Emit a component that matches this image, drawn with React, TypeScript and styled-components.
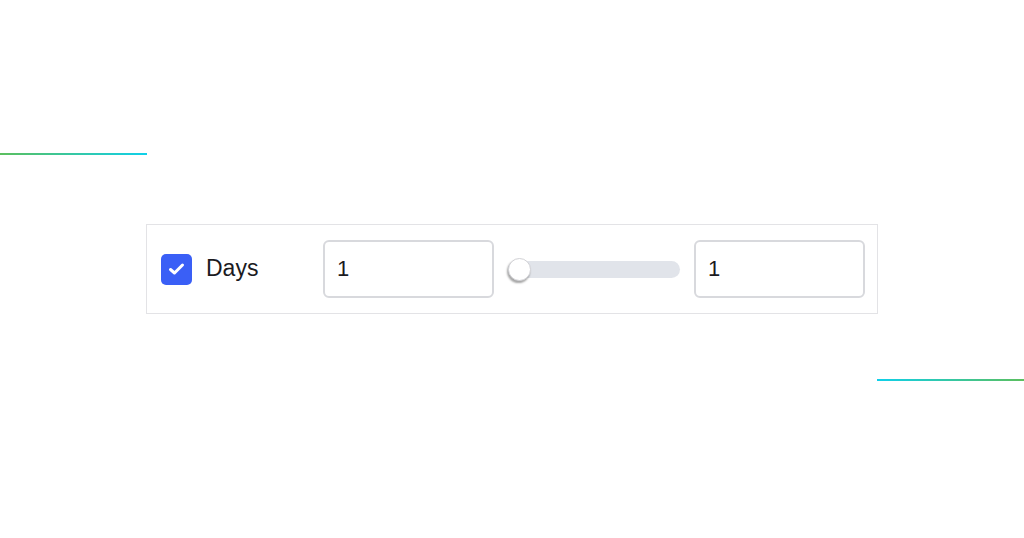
import React from 'react';
import styled, { createGlobalStyle } from 'styled-components';

const GlobalStyle = createGlobalStyle`
    html, body {
        margin: 0;
        padding: 0;
        background: #ffffff;
    }
`;

const Page = styled.div`
    display: flex;
    flex-direction: column;
    width: 1024px;
    height: 538px;
    padding-top: 153px;
    box-sizing: border-box;
    font-family: 'Liberation Sans', Arial, sans-serif;
    color: #1b1b1f;
`;

const Accent = styled.div<{ $reverse?: boolean }>`
    width: 147px;
    height: 2px;
    align-self: ${({ $reverse }) => ($reverse ? 'flex-end' : 'flex-start')};
    margin-top: ${({ $reverse }) => ($reverse ? '65px' : '0')};
    background: linear-gradient(
        ${({ $reverse }) => ($reverse ? 'to left' : 'to right')},
        #5cbf5e,
        #0fd0ea
    );
`;

const Panel = styled.div`
    display: flex;
    align-items: center;
    gap: 14px;
    width: 732px;
    height: 90px;
    margin: 69px 0 0 146px;
    padding: 0 14px;
    box-sizing: border-box;
    border: 1px solid #e3e3e6;
`;

const Checkbox = styled.span`
    display: flex;
    align-items: center;
    justify-content: center;
    flex: 0 0 31px;
    height: 31px;
    border-radius: 5px;
    background: #3a5ff6;
`;

const Label = styled.span`
    flex: 0 0 103px;
    font-size: 23px;
    margin-top: -2px;
`;

const NumberBox = styled.div`
    display: flex;
    align-items: center;
    flex: 0 0 171px;
    height: 58px;
    padding: 0 12px;
    box-sizing: border-box;
    border: 2px solid #d8d9dd;
    border-radius: 6px;
    font-size: 22px;
`;

const Track = styled.div`
    position: relative;
    display: flex;
    align-items: center;
    flex: 0 0 172px;
    height: 17px;
    border-radius: 9px;
    background: #e1e4ea;
`;

const Thumb = styled.span`
    position: absolute;
    left: 0;
    width: 23px;
    height: 23px;
    box-sizing: border-box;
    border-radius: 50%;
    background: #ffffff;
    border: 1px solid #d2d2d6;
    box-shadow: -1px 2px 2px rgba(0, 0, 0, 0.35);
`;

const App: React.FC = () => (
    <>
        <GlobalStyle />
        <Page>
            <Accent />
            <Panel>
                <Checkbox>
                    <svg width="17" height="14" viewBox="0 0 17 14" fill="none">
                        <path
                            d="M2.5 7.5 L6.5 11 L14.5 3"
                            stroke="#ffffff"
                            strokeWidth="3"
                            strokeLinecap="round"
                            strokeLinejoin="round"
                        />
                    </svg>
                </Checkbox>
                <Label>Days</Label>
                <NumberBox>1</NumberBox>
                <Track>
                    <Thumb />
                </Track>
                <NumberBox>1</NumberBox>
            </Panel>
            <Accent $reverse />
        </Page>
    </>
);

export default App;
